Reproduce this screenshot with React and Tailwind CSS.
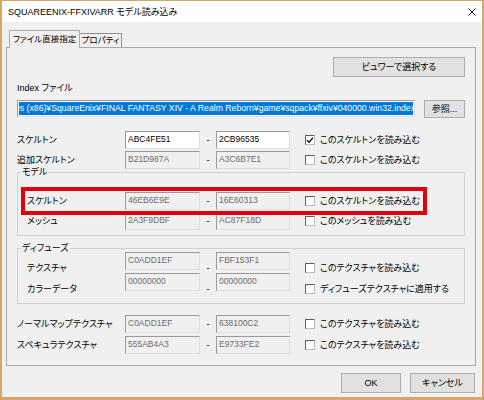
import React from 'react';

const Checkbox = ({ checked }) => (
  <div className="w-[10px] h-[10px] bg-white border border-t-[#5e5e5e] border-l-[#5e5e5e] border-r-[#bdbdbd] border-b-[#bdbdbd] flex items-center justify-center">
    {checked && (
      <svg width="8" height="8" viewBox="0 0 8 8">
        <path d="M1 4.2 L3.1 6.2 L7 1.6" fill="none" stroke="#111" strokeWidth="1.4" />
      </svg>
    )}
  </div>
);

const Field = ({ value, enabled, className }) => (
  <div
    className={`${className} h-[18px] flex items-start pt-[2px] pl-[2px] border border-t-[#9a9a9a] border-l-[#9a9a9a] border-r-[#dedede] border-b-[#dedede] text-[8.5px] leading-[11px] ${
      enabled ? 'bg-white text-black' : 'bg-[#f0f0f0] text-[#6d6d6d]'
    }`}
  >
    {value}
  </div>
);

const Row = ({ label, a, b, enabled, check, checked, shift, wide }) => (
  <div className="flex items-start h-[18px] whitespace-nowrap">
    <div className={`${wide ? 'w-[108px]' : 'w-[98px]'} h-[18px] flex items-center ${shift ? 'mt-[7px]' : ''}`}>
      {label}
    </div>
    <Field className="w-[75px]" value={a} enabled={enabled} />
    <div className={`w-[16px] h-[18px] flex items-center justify-center ${shift ? 'mt-[7px]' : ''}`}>-</div>
    <Field className="w-[74px]" value={b} enabled={enabled} />
    <div className={`flex items-center h-[18px] ml-[15px] ${shift ? 'mt-[7px]' : ''}`}>
      <Checkbox checked={checked} />
      <span className="ml-[5px]">{check}</span>
    </div>
  </div>
);

const Button = ({ children, className }) => (
  <div className={`${className} flex items-center justify-center bg-[#e1e1e1] border border-[#adadad] whitespace-nowrap`}>{children}</div>
);

export default function App() {
  return (
    <div className="w-[484px] h-[400px] bg-[#f0f0f0] border-x-2 border-t border-b-[3px] border-[#d9a56b] flex flex-col text-[9px] leading-[12px] text-black font-['Liberation_Sans','Noto_Sans_CJK_JP',sans-serif] [font-feature-settings:'palt']">
      {/* title bar */}
      <div className="h-[21px] bg-white flex items-center justify-between pl-[6px] pr-[6px] pt-[1px]">
        <span>SQUAREENIX-FFXIVARR モデル読み込み</span>
        <svg width="8" height="8" viewBox="0 0 8 8">
          <path d="M0.5 0.5 L7.5 7.5 M7.5 0.5 L0.5 7.5" stroke="#222" strokeWidth="1" />
        </svg>
      </div>

      <div className="pl-[4px] pt-[8px]">
        {/* tabs */}
        <div className="flex items-end ml-[3px] whitespace-nowrap text-[8.5px]">
          <div className="relative z-10 w-[71px] h-[18px] mb-[-1px] bg-[#f0f0f0] border-l border-t border-r border-[#adadad] flex items-start justify-center pt-[2px]">
            ファイル直接指定
          </div>
          <div className="w-[42px] h-[14px] border-t border-r border-[#8f8f8f] flex items-start justify-center">
            プロパティ
          </div>
        </div>

        {/* tab page */}
        <div className="relative w-[470px] h-[319px] border border-[#a9a9a9] pt-[9px] px-[10px]">
          <div className="flex justify-end">
            <Button className="w-[132px] h-[20px]">ビュワーで選択する</Button>
          </div>

          <div className="mt-[5px] h-[12px]">Index ファイル</div>

          <div className="mt-[6px] flex items-start">
            <div className="w-[398px] h-[17px] bg-white border border-t-[#9a9a9a] border-l-[#9a9a9a] border-r-[#dedede] border-b-[#dedede] pl-[1px] pt-[1px] pr-[1px]">
              <div className="h-[13px] overflow-hidden flex justify-end">
                <span className="mr-[-2px] whitespace-nowrap bg-[#0078d7] text-white text-[8.7px] leading-[13px]">
                  C:¥Program Files (x86)¥SquareEnix¥FINAL FANTASY XIV - A Realm Reborn¥game¥sqpack¥ffxiv¥040000.win32.index
                </span>
              </div>
            </div>
            <Button className="ml-[9px] w-[41px] h-[18px]">参照...</Button>
          </div>

          <div className="mt-[13px]">
            <Row wide label="スケルトン" a="ABC4FE51" b="2CB96535" enabled checked check="このスケルトンを読み込む" />
          </div>
          <div className="mt-[2px]">
            <Row wide label="追加スケルトン" a="B21D987A" b="A3C6B7E1" check="このスケルトンを読み込む" />
          </div>

          <fieldset className="mt-[-3px] border border-[#d0d0d0]">
            <legend className="ml-[3px] px-[1px] leading-[12px]">モデル</legend>
            <div className="pl-[9px] pt-[14px] pb-[5px] flex flex-col gap-[2px]">
              <Row label="スケルトン" a="46EB6E9E" b="16E60313" check="このスケルトンを読み込む" />
              <Row label="メッシュ" a="2A3F9DBF" b="AC87F18D" check="このメッシュを読み込む" />
            </div>
          </fieldset>

          <fieldset className="mt-[6px] border border-[#d0d0d0]">
            <legend className="ml-[3px] px-[1px] leading-[12px]">ディフューズ</legend>
            <div className="pl-[9px] mt-[-2px] pb-[12px] flex flex-col gap-[3px]">
              <Row shift label="テクスチャ" a="C0ADD1EF" b="FBF153F1" check="このテクスチャを読み込む" />
              <Row shift label="カラーデータ" a="00000000" b="00000000" check="ディフューズテクスチャに適用する" />
            </div>
          </fieldset>

          <div className="mt-[11px]">
            <Row wide label="ノーマルマップテクスチャ" a="C0ADD1EF" b="638100C2" check="このテクスチャを読み込む" />
          </div>
          <div className="mt-[3px]">
            <Row wide label="スペキュラテクスチャ" a="555AB4A3" b="E9733FE2" check="このテクスチャを読み込む" />
          </div>

          {/* red highlight drawn over the form */}
          <div className="absolute left-[14px] top-[139px] w-[406px] h-[28px] border-[4px] border-[#e2000c]" />
        </div>
      </div>

      <div className="mt-[7px] flex justify-end gap-[9px] pr-[7px]">
        <Button className="w-[60px] h-[20px] border-[#6f6f6f]">OK</Button>
        <Button className="w-[65px] h-[20px]">キャンセル</Button>
      </div>
    </div>
  );
}
